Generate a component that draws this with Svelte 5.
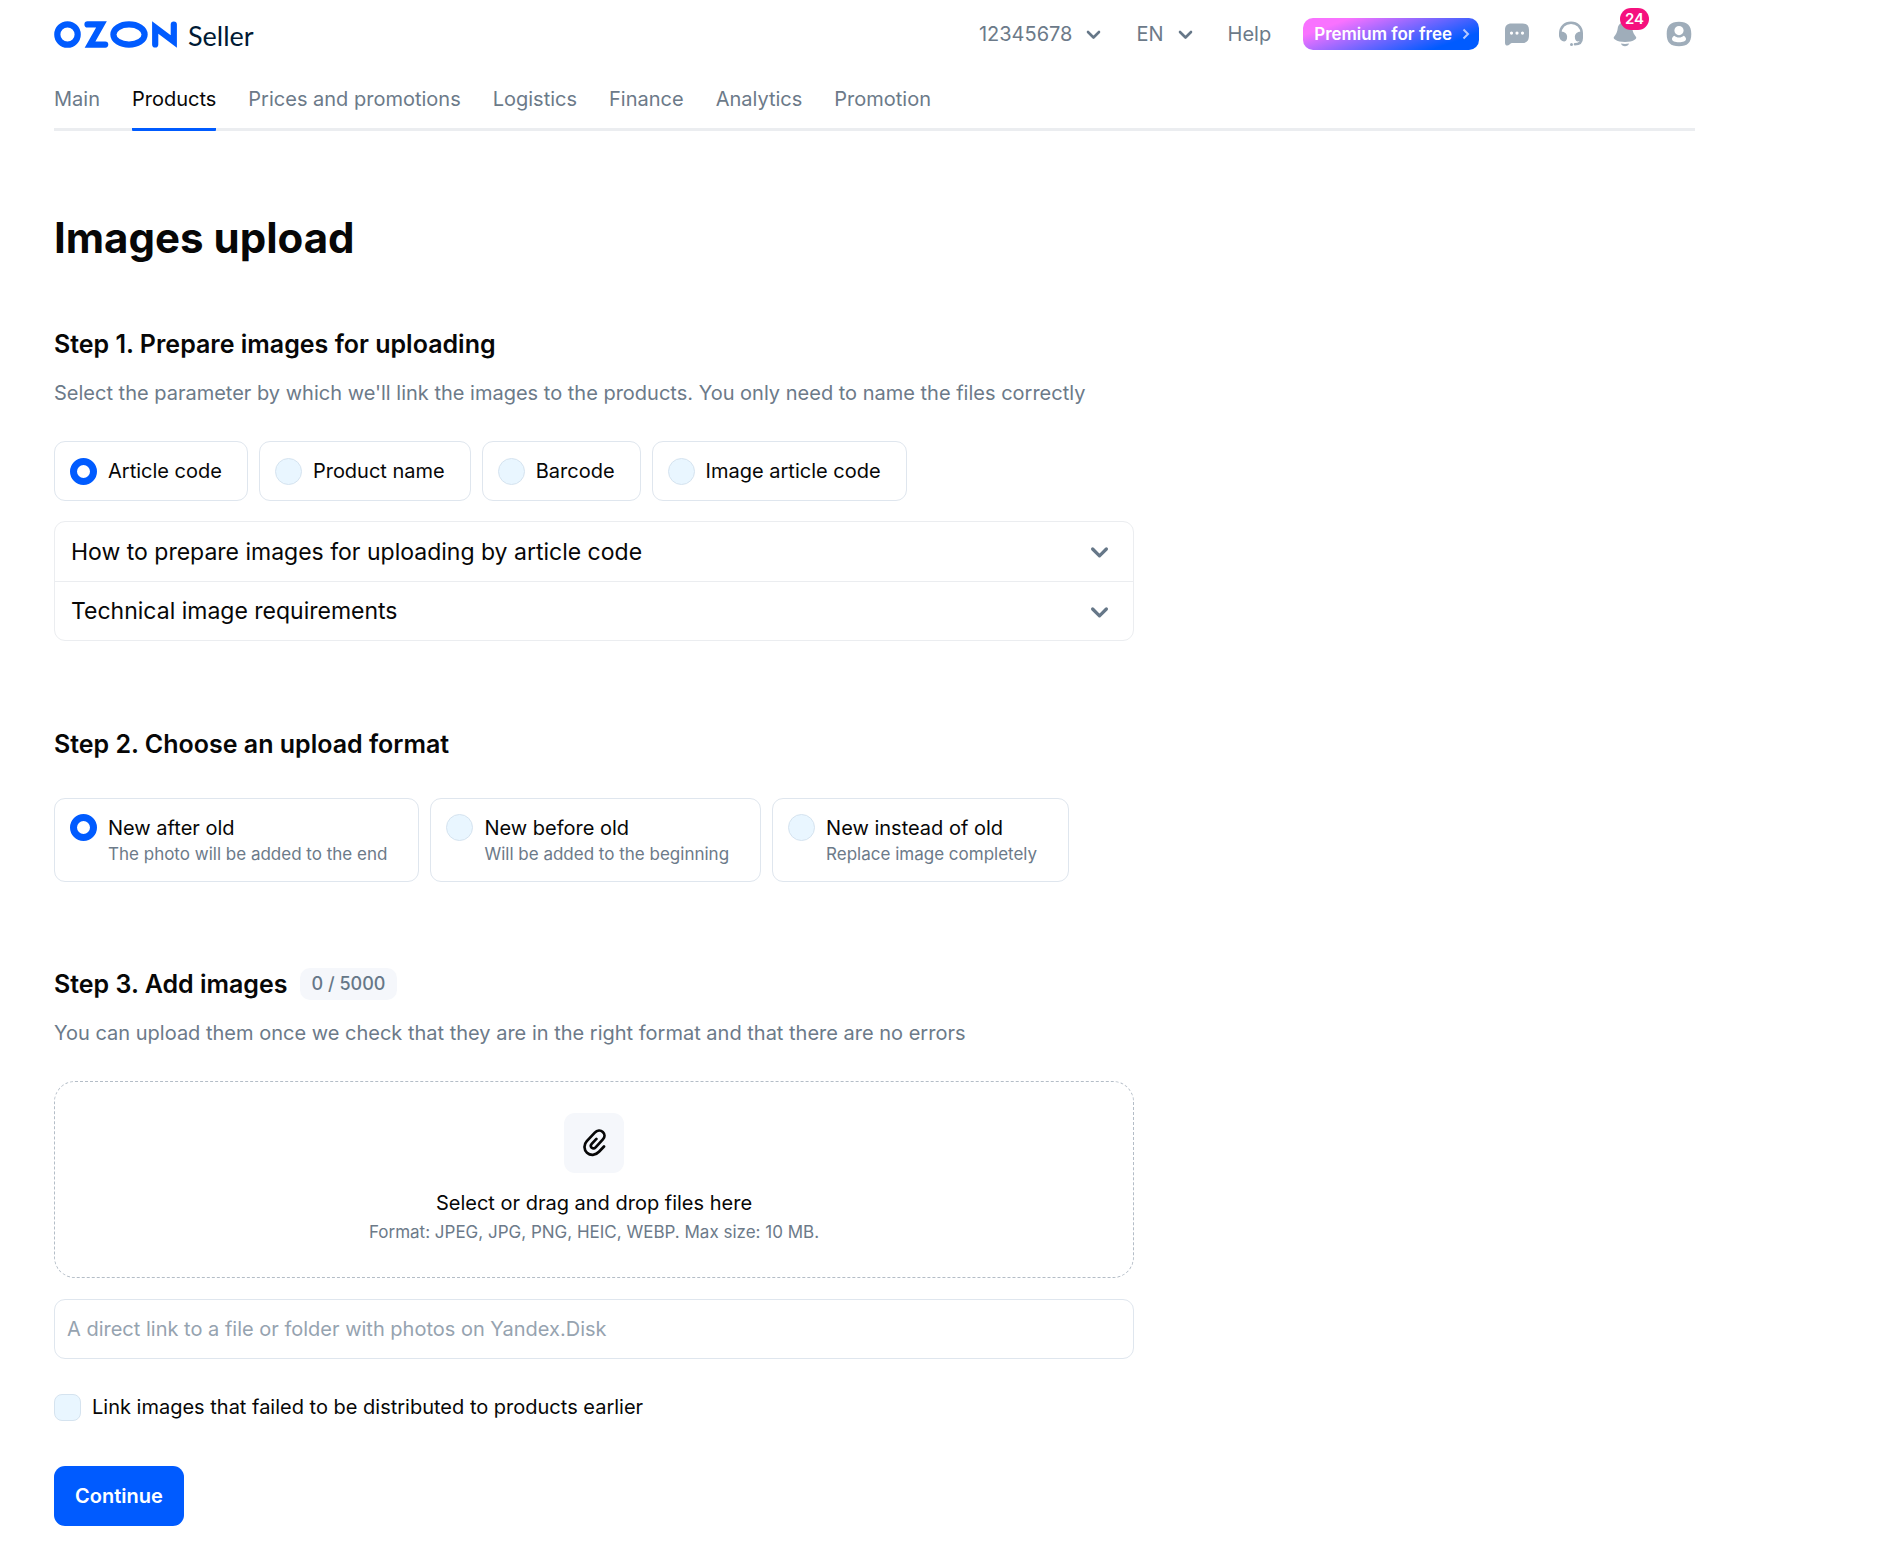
<script>
  const tabs = ['Main', 'Products', 'Prices and promotions', 'Logistics', 'Finance', 'Analytics', 'Promotion'];
  const parameters = ['Article code', 'Product name', 'Barcode', 'Image article code'];
  const formats = [
    { title: 'New after old', note: 'The photo will be added to the end' },
    { title: 'New before old', note: 'Will be added to the beginning' },
    { title: 'New instead of old', note: 'Replace image completely' }
  ];
  const hints = ['How to prepare images for uploading by article code', 'Technical image requirements'];

  let parameter = $state('Article code');
  let format = $state('New after old');
  let link = $state('');
  let relink = $state(false);
</script>

{#snippet chevron()}
  <svg class="chevron" viewBox="0 -2 15 12" aria-hidden="true"><path d="M2 2l5.500 5.500L13 2" /></svg>
{/snippet}

<div class="page">
  <header>
    <div class="top">
      <a class="brand" href="#home" aria-label="Ozon Seller">
        <svg class="logo" viewBox="0 0 123 27" aria-hidden="true">
          <ellipse cx="13.5" cy="13.5" rx="10.2" ry="10.2" />
          <ellipse cx="75" cy="13.5" rx="15.6" ry="10.2" />
          <path d="M33.500 3.400H47.500L36 23.600H51.200" />
          <path d="M101.200 23.500V6.500L119.800 20.500V3.500" />
        </svg>
        <span>Seller</span>
      </a>
      <div class="tools">
        <div class="picker">
          <select aria-label="Company"><option>12345678</option></select>
          {@render chevron()}
        </div>
        <div class="picker">
          <select aria-label="Language"><option>EN</option></select>
          {@render chevron()}
        </div>
        <a class="help" href="#help">Help</a>
        <button class="premium" type="button">
          Premium for free
          <svg viewBox="0 0 8 12" aria-hidden="true"><path d="M1.500 1.500L6 6l-4.500 4.500" /></svg>
        </button>
        <div class="icons">
          <button type="button" aria-label="Chat">
            <svg viewBox="0 0 26 26"><path fill-rule="evenodd" d="M7.500 2.500h11c4.500 0 6.500 2.300 6.500 6.500v5c0 5.500-2 8-7 8H9c-1.800 0-2.200 0-3.500 1.500-1.700 1.900-4.500 1.200-4.500-1.500V9c0-4.200 2-6.500 6.500-6.500zM7.500 10.500a1.600 1.600 0 1 0 0 3.200 1.600 1.600 0 0 0 0-3.200zm5.500 0a1.600 1.600 0 1 0 0 3.200 1.600 1.600 0 0 0 0-3.200zm5.500 0a1.600 1.600 0 1 0 0 3.200 1.600 1.600 0 0 0 0-3.200z" /></svg>
          </button>
          <button type="button" aria-label="Support">
            <svg viewBox="0 0 26 26">
              <path class="line" d="M2.300 14.500v-2C2.300 6 7 1.700 13 1.700S23.700 6 23.700 12.500v4.500c0 4-2.500 6.300-6.700 6.300" />
              <path d="M1 12.500c1-1.700 3-2 4.600-1.500C8.500 12 9.600 14.500 9 17.500c-.6 2.800-2.500 3.600-4.700 2.600C1.500 18.800 1 16 1 12.500zM25 12.500c-1-1.700-3-2-4.600-1.500-2.900 1-4 3.500-3.400 6.500.6 2.800 2.500 3.600 4.700 2.600 2.800-1.300 3.300-4.100 3.300-7.600z" />
              <circle cx="13.500" cy="23.600" r="1.500" />
            </svg>
          </button>
          <button type="button" aria-label="Notifications">
            <svg viewBox="0 0 26 26"><path d="M13 1c4 0 6.800 2.500 7.300 6.500.4 3 1 4.500 2.200 6.300C24.500 16.500 25 17 23 18.500 20.500 20.300 17 21 13 21s-7.500-.7-10-2.500c-2-1.500-1.500-2 .5-4.700 1.200-1.800 1.800-3.300 2.200-6.300C6.200 3.500 9 1 13 1zM9 22.500c2.500.6 5.500.6 8 0-.5 1.700-2 2.700-4 2.700s-3.500-1-4-2.700z" /></svg>
            <span class="count">24</span>
          </button>
          <button type="button" aria-label="Profile">
            <svg viewBox="0 0 26 26"><path fill-rule="evenodd" d="M13 .7c8.500 0 12.300 3.800 12.300 12.300S21.500 25.300 13 25.300.7 21.500.7 13 4.500.7 13 .7zM13 5a4.600 4.600 0 1 0 0 9.200A4.600 4.600 0 0 0 13 5zM8.300 14.800C6.500 16 6 17 6 18c0 2.200 3 3.300 7 3.300s7-1.100 7-3.300c0-1-.5-2-2.300-3.200-1.300 1.200-2.900 1.800-4.700 1.800s-3.400-.6-4.700-1.800z" /></svg>
          </button>
        </div>
      </div>
    </div>
    <nav aria-label="Sections">
      {#each tabs as tab}
        <a href="#{tab}" class:active={tab === 'Products'} aria-current={tab === 'Products' ? 'page' : undefined}>{tab}</a>
      {/each}
    </nav>
  </header>

  <main>
    <h1>Images upload</h1>

    <section class="prepare">
      <h2>Step 1. Prepare images for uploading</h2>
      <p class="lead">Select the parameter by which we'll link the images to the products. You only need to name the files correctly</p>
      <div class="cards" role="radiogroup" aria-label="Linking parameter">
        {#each parameters as name}
          <label class="card">
            <input type="radio" name="parameter" value={name} bind:group={parameter} />
            <span class="title">{name}</span>
          </label>
        {/each}
      </div>
      <div class="accordion">
        {#each hints as hint}
          <button type="button" aria-expanded="false">{hint}{@render chevron()}</button>
        {/each}
      </div>
    </section>

    <section class="format">
      <h2>Step 2. Choose an upload format</h2>
      <div class="cards" role="radiogroup" aria-label="Upload format">
        {#each formats as item}
          <label class="card">
            <input type="radio" name="format" value={item.title} bind:group={format} />
            <span class="text">
              <span class="title">{item.title}</span>
              <span class="note">{item.note}</span>
            </span>
          </label>
        {/each}
      </div>
    </section>

    <section class="add">
      <div class="heading">
        <h2>Step 3. Add images</h2>
        <span class="limit">0 / 5000</span>
      </div>
      <p class="lead">You can upload them once we check that they are in the right format and that there are no errors</p>
      <label class="drop">
        <input class="hidden" type="file" multiple accept=".jpeg,.jpg,.png,.heic,.webp" />
        <span class="clip">
          <svg viewBox="0 0 24 28" aria-hidden="true">
            <path d="M22 17.500l-5 5.300c-3.600 3.800-8.600 4-12 .9-3.300-3.200-3.400-8-.2-11.500l8-8.600c2.300-2.500 5.800-2.700 8-.7 2.200 2.100 2.200 5.200.1 7.500l-7.300 7.900c-1.200 1.300-2.800 1.300-3.900.4-1.100-1.100-1.100-2.600 0-3.800l4.700-5" />
          </svg>
        </span>
        <span class="title">Select or drag and drop files here</span>
        <span class="note">Format: JPEG, JPG, PNG, HEIC, WEBP. Max size: 10 MB.</span>
      </label>
      <input class="link" type="url" aria-label="Yandex.Disk link" placeholder="A direct link to a file or folder with photos on Yandex.Disk" bind:value={link} />
      <label class="check">
        <input type="checkbox" bind:checked={relink} />
        <span>Link images that failed to be distributed to products earlier</span>
      </label>
      <button class="continue" type="button">Continue</button>
    </section>
  </main>
</div>

<style>
  :global(body) {
    background: #fff;
  }

  .page {
    box-sizing: border-box;
    padding: 0 190px 16px 54px;
    color: #070707;
    font: 400 20px/28px Inter, "Open Sans", sans-serif;
  }

  .page :is(button, select, input) {
    font: inherit;
    color: inherit;
    box-sizing: border-box;
  }

  button,
  select {
    margin: 0;
    padding: 0;
    border: 0;
    background: none;
    cursor: pointer;
  }

  a {
    color: inherit;
    text-decoration: none;
  }

  h1,
  h2,
  p {
    margin: 0;
  }

  .top {
    display: flex;
    align-items: center;
    justify-content: space-between;
    height: 68px;
  }

  .brand {
    display: flex;
    align-items: center;
    gap: 11px;
    color: #001a34;
    font: 400 27px/32px Lato, sans-serif;
  }

  .brand span {
    padding-top: 4px;
  }

  .logo {
    width: 123px;
    height: 27px;
    fill: none;
    stroke: #005bff;
    stroke-width: 6.200;
    stroke-linecap: round;
    stroke-linejoin: miter;
    stroke-miterlimit: 4;
  }

  .tools {
    display: flex;
    align-items: center;
    color: #6c7a89;
    gap: 32px;
  }

  .picker {
    display: grid;
    align-items: center;
    margin-right: 3px;
  }

  .picker > :global(*) {
    grid-area: 1 / 1;
  }

  .picker select {
    appearance: none;
    field-sizing: content;
    padding-right: 29px;
  }

  .chevron {
    width: 15px;
    height: 12px;
    justify-self: end;
    pointer-events: none;
    fill: none;
    stroke: #667788;
    stroke-width: 2.600;
    stroke-linecap: round;
    stroke-linejoin: round;
  }

  .page .premium {
    display: flex;
    align-items: center;
    gap: 10px;
    height: 32px;
    padding: 0 9px 0 11px;
    border-radius: 10px;
    background: linear-gradient(160deg, #f972ff 18%, #005bff 82%);
    color: #fff;
    font-size: 17px;
    font-weight: 600;
  }

  .premium svg {
    width: 8px;
    height: 12px;
    fill: none;
    stroke: #b5c8ff;
    stroke-width: 2;
  }

  .icons {
    display: flex;
    gap: 28px;
    padding-right: 3px;
    margin-left: -7px;
  }

  .icons button {
    display: flex;
    position: relative;
  }

  .icons svg {
    width: 26px;
    height: 26px;
    fill: #9fadba;
  }

  .icons .line {
    fill: none;
    stroke: #9fadba;
    stroke-width: 2.600;
    stroke-linecap: round;
  }

  .count {
    position: absolute;
    top: -13px;
    left: 8px;
    padding: 0 5px;
    border-radius: 11px;
    background: #f5117e;
    color: #fff;
    font-size: 15px;
    font-weight: 600;
    line-height: 22px;
  }

  nav {
    display: flex;
    gap: 32px;
    height: 60px;
    border-bottom: 3px solid #ebedf0;
    color: #6c7a89;
  }

  nav a {
    padding-top: 17px;
    margin-bottom: -3px;
  }

  nav .active {
    border-bottom: 3px solid #005bff;
    border-radius: 1px;
    color: #070707;
  }

  main {
    max-width: 1080px;
    padding-top: 81px;
  }

  h1 {
    font-size: 42px;
    font-weight: 700;
    line-height: 52px;
  }

  h2 {
    font-size: 25px;
    font-weight: 600;
    line-height: 32px;
  }

  .prepare {
    padding-top: 64px;
  }

  .lead {
    color: #6c7a89;
  }

  .prepare .lead {
    padding: 19px 0 34px;
  }

  .cards {
    display: flex;
    flex-wrap: wrap;
    gap: 11px;
  }

  .card {
    display: flex;
    gap: 11px;
    box-sizing: border-box;
    min-height: 60px;
    padding: 15px 25px 15px 15px;
    border: 1px solid #dfe6ee;
    border-radius: 11px;
    cursor: pointer;
  }

  .card input {
    appearance: none;
    flex: none;
    width: 27px;
    height: 27px;
    margin: 0;
    border: 1px solid #d5e3ef;
    border-radius: 50%;
    background: #e9f6ff;
  }

  .card input:checked {
    border: 7px solid #005bff;
    background: #fff;
  }

  .prepare .card {
    align-items: center;
  }

  .text {
    display: grid;
  }

  .note {
    color: #6c7a89;
    font-size: 17px;
    line-height: 24px;
  }

  .accordion {
    display: grid;
    margin-top: 20px;
    border: 1px solid #ebedf0;
    border-radius: 11px;
  }

  .accordion button {
    display: flex;
    align-items: center;
    justify-content: space-between;
    height: 59px;
    padding: 0 24px 0 16px;
    font-size: 23px;
    text-align: left;
  }

  .accordion button + button {
    border-top: 1px solid #ebedf0;
  }

  .accordion .chevron {
    width: 19px;
    height: 15px;
  }

  .format {
    padding-top: 87px;
  }

  .format .cards {
    padding-top: 38px;
  }

  .format .card {
    min-height: 84px;
    padding-right: 31px;
  }

  .add {
    padding-top: 86px;
  }

  .heading {
    display: flex;
    align-items: center;
    gap: 12px;
  }

  .limit {
    padding: 0 12px;
    border-radius: 10px;
    background: #f5f7fb;
    color: #667788;
    font-size: 18px;
    font-weight: 500;
    line-height: 32px;
  }

  .add .lead {
    padding: 19px 0 34px;
  }

  .drop {
    display: grid;
    justify-items: center;
    padding: 31px 16px 33px;
    border: 1px dashed #b4bdc7;
    border-radius: 21px;
    cursor: pointer;
  }

  .hidden {
    position: absolute;
    opacity: 0;
    width: 1px;
    height: 1px;
  }

  .clip {
    display: grid;
    place-items: center;
    width: 60px;
    height: 60px;
    margin-bottom: 16px;
    border-radius: 11px;
    background: #f5f7fb;
  }

  .clip svg {
    width: 24px;
    height: 28px;
    fill: none;
    stroke: #070707;
    stroke-width: 2.700;
    stroke-linecap: round;
    stroke-linejoin: round;
  }

  .drop .note {
    padding-top: 3px;
  }

  .link {
    display: block;
    width: 100%;
    height: 60px;
    margin: 21px 0 34px;
    padding: 0 12px;
    border: 1px solid #dfe6ee;
    border-radius: 11px;
    background: #fff;
  }

  .link::placeholder {
    color: #96a3b0;
    opacity: 1;
  }

  .check {
    display: flex;
    align-items: center;
    gap: 11px;
    width: fit-content;
    cursor: pointer;
  }

  .check input {
    appearance: none;
    width: 27px;
    height: 27px;
    margin: 0;
    border: 1px solid #d5e3ef;
    border-radius: 8px;
    background: #e9f6ff;
  }

  .check input:checked {
    border: 7px solid #005bff;
  }

  .page .continue {
    height: 60px;
    margin-top: 45px;
    padding: 0 21px;
    border-radius: 11px;
    background: #005bff;
    color: #fff;
    font-weight: 600;
  }
</style>
